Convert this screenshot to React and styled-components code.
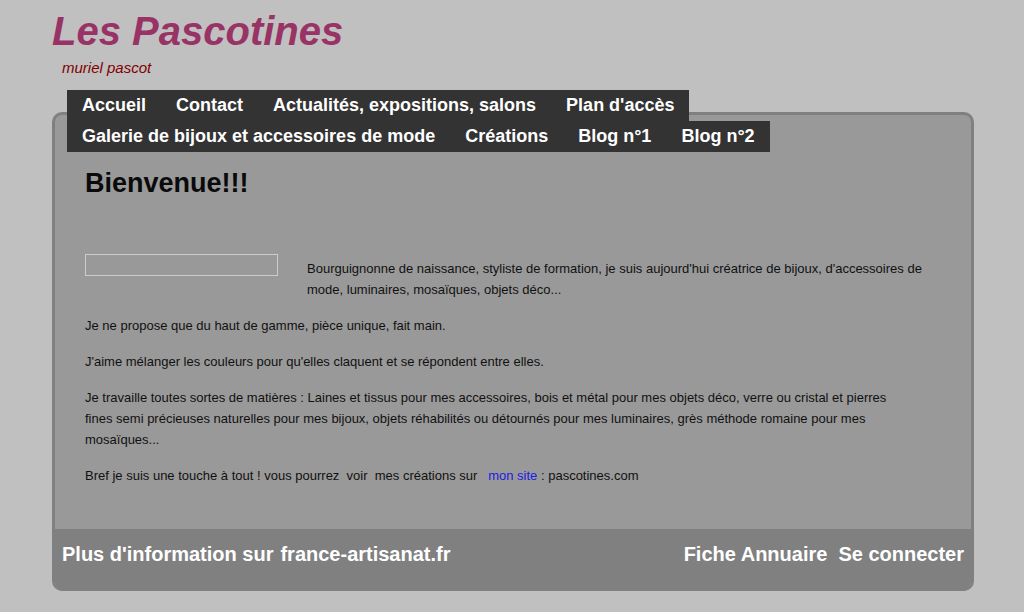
import styled, { createGlobalStyle } from "styled-components"

const GlobalStyle = createGlobalStyle`
  body {
    margin: 0;
    background-color: #c0c0c0;
    font-family: "Liberation Sans", Arial, sans-serif;
  }
`

const Page = styled.div`
  width: 922px;
  margin-left: 52px;
  padding-top: 8px;
`

const Header = styled.header`
  display: flex;
  flex-direction: column;
`

const Title = styled.h1`
  margin: 0;
  font-size: 40px;
  line-height: 46px;
  font-style: italic;
  font-weight: bold;
  color: #993366;
`

const Tagline = styled.p`
  margin: 5px 0 0 10px;
  font-size: 15px;
  line-height: 18px;
  font-style: italic;
  color: #800000;
`

const NavMenu = styled.ul`
  position: relative;
  z-index: 1;
  display: flex;
  flex-wrap: wrap;
  width: 710px;
  margin: 13px 0 -40px 15px;
  padding: 0;
  list-style: none;
`

const NavMenuElt = styled.li`
  padding: 0 15px;
  background-color: #333333;
  color: #ffffff;
  font-size: 18px;
  font-weight: bold;
  line-height: 31px;
  white-space: nowrap;
`

const Panel = styled.main`
  border: 3px solid #808080;
  border-bottom: 0;
  border-radius: 10px;
  overflow: hidden;
  background-color: #999999;
`

const Content = styled.section`
  padding: 53px 30px 43px 30px;
  color: #111111;
  font-size: 13px;
  line-height: 21px;
`

const Heading = styled.h2`
  margin: 0 0 55px 0;
  font-size: 27px;
  line-height: 31px;
  font-weight: bold;
  color: #0a0a0a;
`

const Intro = styled.div`
  display: flex;
  align-items: flex-start;
  margin-bottom: 15px;
`

const Frame = styled.div`
  flex: none;
  width: 191px;
  height: 20px;
  margin-right: 29px;
  border: 1px solid #cccccc;
`

const IntroText = styled.p`
  width: 638px;
  margin: 4px 0 0 0;
`

const Para = styled.p`
  width: 830px;
  margin: 0 0 15px 0;

  &:last-child {
    margin-bottom: 0;
  }
`

const Link = styled.a`
  color: #2020e0;
  text-decoration: none;
`

const Footer = styled.footer`
  display: flex;
  justify-content: space-between;
  padding: 13px 7px 25px 7px;
  background-color: #808080;
  color: #ffffff;
  font-size: 20px;
  font-weight: bold;
  line-height: 24px;
`

const FooterGroup = styled.div`
  display: flex;
  gap: ${(props) => props.$gap}px;
`

export default function App() {
  return (
    <>
      <GlobalStyle />
      <Page>
        <Header>
          <Title>Les Pascotines</Title>
          <Tagline>muriel pascot</Tagline>
        </Header>
        <NavMenu>
          <NavMenuElt>Accueil</NavMenuElt>
          <NavMenuElt>Contact</NavMenuElt>
          <NavMenuElt>Actualités, expositions, salons</NavMenuElt>
          <NavMenuElt>Plan d'accès</NavMenuElt>
          <NavMenuElt>Galerie de bijoux et accessoires de mode</NavMenuElt>
          <NavMenuElt>Créations</NavMenuElt>
          <NavMenuElt>Blog n°1</NavMenuElt>
          <NavMenuElt>Blog n°2</NavMenuElt>
        </NavMenu>
        <Panel>
          <Content>
            <Heading>Bienvenue!!!</Heading>
            <Intro>
              <Frame />
              <IntroText>
                Bourguignonne de naissance, styliste de formation, je suis aujourd'hui créatrice de bijoux, d'accessoires de mode, luminaires, mosaïques, objets déco...
              </IntroText>
            </Intro>
            <Para>Je ne propose que du haut de gamme, pièce unique, fait main.</Para>
            <Para>J'aime mélanger les couleurs pour qu'elles claquent et se répondent entre elles.</Para>
            <Para>
              Je travaille toutes sortes de matières : Laines et tissus pour mes accessoires, bois et métal pour mes objets déco, verre ou cristal et pierres fines semi précieuses naturelles pour mes bijoux, objets réhabilités ou détournés pour mes luminaires, grès méthode romaine pour mes mosaïques...
            </Para>
            <Para>
              Bref je suis une touche à tout ! vous pourrez&nbsp; voir&nbsp; mes créations sur&nbsp;&nbsp; <Link href="#">mon site</Link> : pascotines.com
            </Para>
          </Content>
          <Footer>
            <FooterGroup $gap={7}>
              <span>Plus d'information sur</span>
              <span>france-artisanat.fr</span>
            </FooterGroup>
            <FooterGroup $gap={11}>
              <span>Fiche Annuaire</span>
              <span>Se connecter</span>
            </FooterGroup>
          </Footer>
        </Panel>
      </Page>
    </>
  )
}
